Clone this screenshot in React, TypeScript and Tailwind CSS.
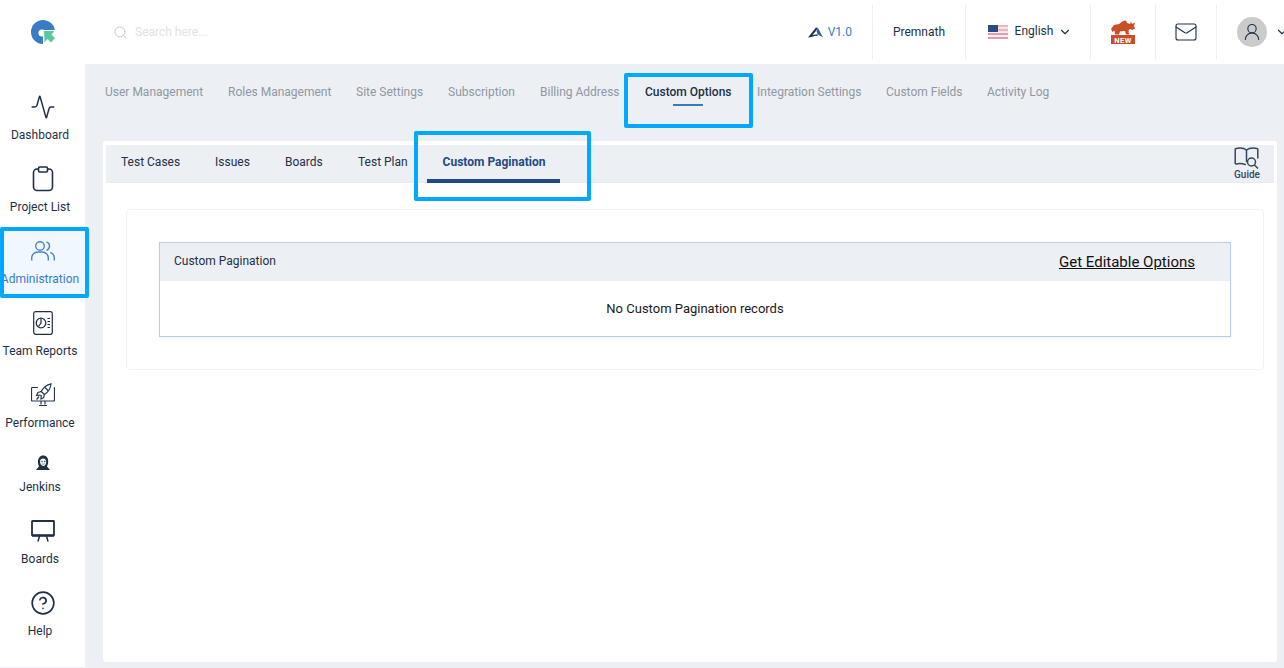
import { Activity, ChevronDown, CircleHelp, Mail, Search, UserRound } from "lucide-react";
import type { ReactNode } from "react";

const TOP_TABS = [
  { label: "User Management", w: "w-[123px]" },
  { label: "Roles Management", w: "w-[128px]" },
  { label: "Site Settings", w: "w-[92px]" },
  { label: "Subscription", w: "w-[92px]" },
  { label: "Billing Address", w: "w-[105px]" },
  { label: "Custom Options", w: "w-[112px]", active: true },
  { label: "Integration Settings", w: "w-[129px]" },
  { label: "Custom Fields", w: "w-[101px]" },
  { label: "Activity Log", w: "w-[80px]" },
];

const SUB_TABS = [
  { label: "Test Cases", w: "w-[94px]" },
  { label: "Issues", w: "w-[70px]" },
  { label: "Boards", w: "w-[73px]" },
  { label: "Test Plan", w: "w-[69px]" },
];

function ClipboardIcon() {
  return (
    <svg width="22" height="26" viewBox="0 0 22 26" fill="none" stroke="#1e3046" strokeWidth="1.6">
      <rect x="1.5" y="3" width="19" height="21.5" rx="3.5" />
      <rect x="6.5" y="1" width="9" height="5" rx="1.2" fill="#fff" />
    </svg>
  );
}

function UsersIcon() {
  return (
    <svg width="24" height="20" viewBox="0 0 24 20" fill="none" stroke="#4a86c8" strokeWidth="1.4">
      <circle cx="9" cy="5" r="4.3" />
      <path d="M.7 19.500V17a6 6 0 0 1 6-6h4.600a6 6 0 0 1 6 6v2.500" />
      <path d="M15.500.8a4.500 4.500 0 0 1 0 8.500" />
      <path d="M23.300 19.500V17a6 6 0 0 0-4-5.600" />
    </svg>
  );
}

function ReportIcon() {
  return (
    <svg width="20" height="24" viewBox="0 0 20 24" fill="none" stroke="#1e3046">
      <rect x="0.7" y="0.7" width="18.6" height="22.6" rx="2" strokeWidth="1.2" />
      <circle cx="8" cy="12" r="4.8" strokeWidth="1.3" />
      <path d="M8 7.500V12L5.500 15.500" strokeWidth="1.2" />
      <path d="M14.500 7.500h2.500M14.500 10.500h2.500M14.500 13.500h2.500M14.500 16.500h2.500" strokeWidth="1" />
    </svg>
  );
}

function RocketIcon() {
  return (
    <svg width="24" height="24" viewBox="0 0 24 24" fill="none" stroke="#26384d" strokeWidth="1.2">
      <path d="M7 4.500H1.500a1 1 0 0 0-1 1V17a1 1 0 0 0 1 1h21a1 1 0 0 0 1-1V5.500a1 1 0 0 0-.6-.9" />
      <path d="M10 18v3.500M14 18v3.500M8 22.500h8" />
      <path d="M20 .8c-4 .8-7.500 3.200-9.800 7.700l3.200 3C17 9.500 19.500 5.500 20 .8Z" />
      <path d="M14 4.500l3.500 3.500" />
      <path d="M10.200 8.500 7 9.500l-1.500 3 4-.5M13.400 11.500l-.8 3.200-2.600 1.300.2-4" />
      <path d="M8 13.500 5.500 16.500" />
    </svg>
  );
}

function JenkinsIcon() {
  return (
    <svg width="16" height="16" viewBox="0 0 16 16">
      <path d="M3 7c0-4 2-6.500 5.200-6.500S13.500 3 13.200 7c-.1 2-.8 3.500-1.200 4.500l3 3.500H1l3-3.500C3.300 10.300 3 8.800 3 7Z" fill="#1e3046" />
      <path d="M5 6.500c0-1.800 1.300-3 3.200-3s3 1.300 3 3.200c0 2-1 4.300-3 4.300S5 8.500 5 6.500Z" fill="#f4f4f4" />
      <circle cx="7" cy="6.500" r=".7" fill="#1e3046" />
      <circle cx="9.800" cy="6.500" r=".7" fill="#1e3046" />
      <path d="M7 8.800c.8.500 1.700.5 2.500 0" stroke="#1e3046" strokeWidth=".6" fill="none" />
    </svg>
  );
}

function BoardIcon() {
  return (
    <svg width="24" height="22" viewBox="0 0 24 22" fill="none" stroke="#1e3046">
      <rect x="1" y="1" width="22" height="14.500" rx="0.500" strokeWidth="1.800" />
      <path d="M1 15.500h22" strokeWidth="2.200" />
      <path d="M8.500 16 7 21.500M15.500 16 17 21.500" strokeWidth="1.500" />
    </svg>
  );
}

function LogoIcon() {
  return (
    <svg width="24" height="24" viewBox="0 0 24 24">
      <circle cx="12" cy="12" r="12" fill="#3a7cc4" />
      <circle cx="11" cy="13" r="3.600" fill="#fff" />
      <path d="M12 10h12v14H12Z" fill="#fff" />
      <path d="M13 11h10.500l-3 3.500 3.500 3.500-4 4.500-3.500-3.500-3 3.500Z" fill="#5fc79e" />
    </svg>
  );
}

function VersionIcon() {
  return (
    <svg width="15" height="11" viewBox="0 0 15 11">
      <path d="M0 10.500 8 .5l2 .5-2.500 3.500L4.500 8l3.500-.5 2.500 1.500-3-.3L3 10Z" fill="#1e3046" />
      <path d="M10 1l5 9.500-5-3-2.500.5 2-1.500L8.500 4Z" fill="#2a5f9e" />
    </svg>
  );
}

function FlagIcon() {
  return (
    <svg width="20" height="14" viewBox="0 0 20 14">
      <rect width="20" height="14" fill="#f4f4f4" />
      <path d="M0 1h20M0 5h20M0 9h20M0 13h20" stroke="#d9475f" strokeWidth="1.200" />
      <rect width="20" height="7" fill="#f0d0d4" opacity=".5" />
      <rect width="10" height="7" fill="#2c4a86" />
    </svg>
  );
}

function RhinoIcon() {
  return (
    <svg width="24" height="24" viewBox="0 0 24 24">
      <path d="M0 9 3 5l5-1 4-3 3-.5 1 2.500 3 1 1-2.500 1 2.500 3-1.500-1 3.500 1 2.500-2.500 1.500-2.500-1-1.500 1.500.5 4h-3l-1-3.500-5 .5-1 3H4l-.5-4-2 1.500Z" fill="#c94f28" />
      <rect x="0" y="15" width="24" height="9" fill="#c94f28" />
      <text x="12" y="22.500" textAnchor="middle" fontSize="7.500" fontWeight="700" fill="#fff" fontFamily="Roboto, sans-serif" letterSpacing=".5">NEW</text>
    </svg>
  );
}

function GuideIcon() {
  return (
    <svg width="26" height="22" viewBox="0 0 26 22" fill="none" stroke="#33475f" strokeWidth="1.500">
      <path d="M12.500 14.500V3C10 1 6 .8 2 1.500c-.5 0-.8.4-.8 1V16c0 .6.4 1 1 .9 3-.5 6-.5 9 .6" strokeLinecap="round" />
      <path d="M12.500 3c2.500-2 6.500-2.200 10.500-1.500.5 0 .8.4.8 1V11" strokeLinecap="round" />
      <circle cx="17.500" cy="15" r="4" />
      <path d="m20.500 18 3.500 3.500" />
    </svg>
  );
}

function NavItem({ icon, label, active, short }: { icon: ReactNode; label: string; active?: boolean; short?: boolean }) {
  return (
    <div
      className={`flex flex-col items-center w-[85px] ${short ? "h-[64px]" : active ? "h-[71px] mb-[1px]" : "h-[72px]"} ${active ? "bg-[#f1f7fe] text-[#3a7cc4]" : "text-[#1e3046]"}`}
    >
      <div className={`flex items-center justify-center h-[26px] ${short ? "mt-[7px]" : "mt-[11px]"}`}>{icon}</div>
      <span className={`text-[12px] leading-[16px] pr-[5px] whitespace-nowrap ${short ? "mt-[3px]" : "mt-[7px]"}`}>{label}</span>
    </div>
  );
}

function HeaderCell({ children, className }: { children: ReactNode; className: string }) {
  return <div className={`flex items-center justify-center h-[54px] border-r border-[#eceff3] ${className}`}>{children}</div>;
}

export default function App() {
  return (
    <div className="relative flex flex-col h-[668px] w-[1284px] overflow-hidden bg-white text-[12px] text-[#1e3046] font-['Roboto',sans-serif]">
      {/* Header */}
      <header className="flex items-center h-[64px] shrink-0 bg-white">
        <div className="flex justify-center w-[85px]">
          <LogoIcon />
        </div>
        <div className="flex items-center flex-1 pl-[28px] gap-[7px]">
          <Search size={15} strokeWidth={1.2} className="text-[#b4bcc0]" />
          <span className="text-[#e2e2e2]">Search here...</span>
        </div>
        <HeaderCell className="w-[85px] gap-[5px] justify-end pr-[20px]">
          <VersionIcon />
          <span className="text-[#3a7cc4]">V1.0</span>
        </HeaderCell>
        <HeaderCell className="w-[93px]">Premnath</HeaderCell>
        <HeaderCell className="w-[125px] gap-[7px] pl-[4px]">
          <FlagIcon />
          <span className="-mt-[2px]">English</span>
          <ChevronDown size={14} strokeWidth={2} className="-ml-[2px]" />
        </HeaderCell>
        <HeaderCell className="w-[65px]">
          <RhinoIcon />
        </HeaderCell>
        <HeaderCell className="w-[61px]">
          <Mail size={24} strokeWidth={1.1} />
        </HeaderCell>
        <div className="flex items-center w-[67px] pl-[20px] gap-[8px] shrink-0">
          <div className="flex items-center justify-center w-[30px] h-[30px] shrink-0 rounded-full bg-[#cbcbcb]">
            <UserRound size={20} strokeWidth={1.3} />
          </div>
          <ChevronDown size={14} strokeWidth={2} className="shrink-0" />
        </div>
      </header>

      <div className="flex flex-1 min-h-0">
        {/* Sidebar */}
        <aside className="flex flex-col w-[85px] shrink-0 bg-white pt-[19px] border-b border-[#eceff3]">
          <NavItem icon={<Activity size={26} strokeWidth={1.4} />} label="Dashboard" />
          <NavItem icon={<ClipboardIcon />} label="Project List" />
          <NavItem active icon={<UsersIcon />} label="Administration" />
          <NavItem icon={<ReportIcon />} label="Team Reports" />
          <NavItem icon={<RocketIcon />} label="Performance" />
          <NavItem short icon={<JenkinsIcon />} label="Jenkins" />
          <NavItem icon={<BoardIcon />} label="Boards" />
          <NavItem icon={<CircleHelp size={26} strokeWidth={1.5} />} label="Help" />
        </aside>

        {/* Main */}
        <main className="flex-1 flex flex-col min-w-0 bg-[#eceff3] pl-[18px] pr-[7px] pb-[6px]">
          <nav className="flex h-[77px] shrink-0 pt-[20px] pl-[2px]">
            {TOP_TABS.map((t) => (
              <div key={t.label} className={`${t.w} shrink-0 ${t.active ? "font-medium text-[#1e3046]" : "text-[#8f97a3]"}`}>
                <div className="leading-[16px] whitespace-nowrap">{t.label}</div>
                {t.active && <div className="border-t-2 border-[#3a78c2] w-[30px] ml-[28px] mt-[4px]" />}
              </div>
            ))}
          </nav>

          <section className="flex-1 flex flex-col bg-white rounded-[3px] px-[3px] pt-[4px]">
            <div className="flex h-[38px] shrink-0 bg-[#eceff3] pl-[15px] border-b border-[#e6e9ed]">
              {SUB_TABS.map((t) => (
                <div key={t.label} className={`${t.w} shrink-0 pt-[9px] leading-[16px]`}>
                  {t.label}
                </div>
              ))}
              <div className="flex flex-col w-[133px] h-[38px] items-center pt-[9px] pl-[1px] leading-[16px] font-bold text-[#1f4a82]">
                Custom Pagination
                <div className="mt-[9px] -ml-[1px] h-[4px] w-[133px] shrink-0 bg-[#1f4a82]" />
              </div>
              <div className="ml-auto flex flex-col items-center w-[40px] mr-[7px] mt-[2px]">
                <GuideIcon />
                <span className="text-[10px] font-medium leading-[10px] text-[#33475f] mt-[1px]">Guide</span>
              </div>
            </div>

            <div className="mt-[26px] ml-[20px] mr-[10px] h-[161px] rounded-[4px] border border-[#f1f2f4] pt-[32px] px-[32px]">
              <div className="h-[95px] border border-[#bccde0] shadow-[0_1px_3px_rgba(0,0,0,0.06)]">
                <div className="flex items-center justify-between h-[38px] bg-[#eceff3] pl-[14px] pr-[35px]">
                  <span className="-mt-[2px]">Custom Pagination</span>
                  <span className="text-[15px] text-[#111] underline">Get Editable Options</span>
                </div>
                <div className="flex items-center justify-center h-[55px] text-[13px] text-[#1a1a1a]">No Custom Pagination records</div>
              </div>
            </div>
          </section>
        </main>
      </div>

      {/* Highlight boxes drawn over the screenshot */}
      <div className="absolute left-0 top-[227px] w-[89px] h-[71px] border-4 border-[#00a8ff] rounded-[2px]" />
      <div className="absolute left-[624px] top-[73px] w-[129px] h-[55px] border-4 border-[#00a8ff] rounded-[2px]" />
      <div className="absolute left-[414px] top-[131px] w-[177px] h-[70px] border-4 border-[#00a8ff] rounded-[2px]" />
    </div>
  );
}
